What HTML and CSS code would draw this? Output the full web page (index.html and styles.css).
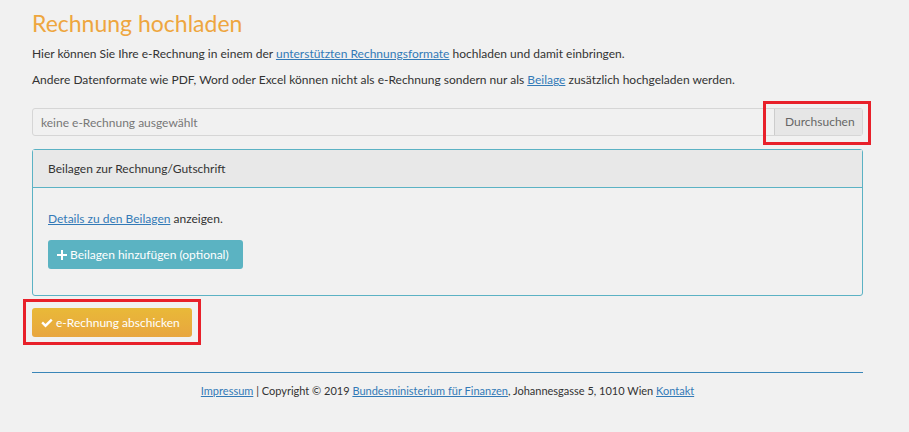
FILE: index.html
```html
<!DOCTYPE html>
<html lang="de">
<head>
    <meta charset="UTF-8">
    <meta name="viewport" content="width=device-width, initial-scale=1.0">
    <title>Rechnung hochladen</title>
    <link rel="stylesheet" href="styles.css">
</head>
<body>

    <div class="container">
        <h1 class="page-title">Rechnung hochladen</h1>
        <p>Hier können Sie Ihre e-Rechnung in einem der <a href="#">unterstützten Rechnungsformate</a> hochladen und damit einbringen.</p>
        <p>Andere Datenformate wie PDF, Word oder Excel können nicht als e-Rechnung sondern nur als <a href="#">Beilage</a> zusätzlich hochgeladen werden.</p>

        <!-- Dateiauswahl -->
        <div class="file-group">
            <div class="file-name">keine e-Rechnung ausgewählt</div>
            <div class="mark mark-browse">
                <span class="btn-browse">Durchsuchen</span>
            </div>
        </div>

        <!-- Beilagen -->
        <div class="panel">
            <div class="panel-heading">Beilagen zur Rechnung/Gutschrift</div>
            <div class="panel-body">
                <p><a href="#">Details zu den Beilagen</a> anzeigen.</p>
                <button class="btn btn-info">
                    <svg class="icon" viewBox="0 0 10 10"><path d="M4 0h2v4h4v2H6v4H4V6H0V4h4z" fill="#fff"/></svg>
                    Beilagen hinzufügen (optional)
                </button>
            </div>
        </div>

        <div class="mark mark-submit">
            <button class="btn btn-warning">
                <svg class="icon icon-check" viewBox="0 0 12 10"><path d="M0.3 5.3l1.7-1.7 2.5 2.5L9.9 0.7l1.7 1.7-7.1 7.1z" fill="#fff"/></svg>
                e-Rechnung abschicken
            </button>
        </div>

        <footer class="footer">
            <a href="#">Impressum</a> | Copyright © 2019 <a href="#">Bundesministerium für Finanzen</a>, Johannesgasse 5, 1010 Wien <a href="#">Kontakt</a>
        </footer>
    </div>

</body>
</html>
```

FILE: styles.css
```css
body {
    margin: 0;
    background: #f1f1f1;
    color: #333;
    font-family: Lato, "Open Sans", sans-serif;
    font-size: 12px;
}

.container {
    width: 831px;
    margin-left: 32px;
}

a {
    color: #337ab7;
    text-decoration: underline;
}

p {
    margin: 0 0 13px;
    line-height: 13px;
}

.page-title {
    color: #eea63f;
    font-size: 23px;
    font-weight: normal;
    margin: 10px 0 11px;
    line-height: 26px;
}

.file-group {
    display: flex;
    align-items: center;
    height: 28px;
    margin-top: 22px;
    border: 1px solid #d6d6d6;
    border-radius: 3px;
    box-sizing: border-box;
}

.file-name {
    flex: 1;
    padding-left: 8px;
    color: #777;
}

.mark {
    border: 3px solid #e8202a;
    display: flex;
}

.mark-browse {
    margin: -8px -9px -10px 0;
    padding: 5px 6px 7px 8px;
}

.btn-browse {
    background: #e6e6e6;
    border-left: 1px solid #ccc;
    color: #666;
    height: 26px;
    line-height: 26px;
    padding: 0 9px 0 10px;
    width: 68px;
}

.panel {
    margin-top: 13px;
    border: 1px solid #5bb2c4;
    border-radius: 3px;
}

.panel-heading {
    background: #e8e8e8;
    border-bottom: 1px solid #5bb2c4;
    height: 37px;
    line-height: 37px;
    padding-left: 15px;
}

.panel-body {
    padding: 24px 15px 26px;
}

.panel-body p {
    margin-bottom: 15px;
}

.btn {
    border: none;
    border-radius: 3px;
    color: #fff;
    font-family: inherit;
    font-size: 12px;
    height: 29px;
    padding: 0 10px;
    display: flex;
    align-items: center;
    gap: 3px;
}

.btn-info {
    background: #5bb3c2;
    width: 195px;
    padding-left: 9px;
}

.btn-warning {
    background: linear-gradient(#e9b938, #e8a63f);
    width: 160px;
    padding-left: 9px;
}

.icon {
    width: 10px;
    height: 10px;
}

.icon-check {
    width: 12px;
}

.mark-submit {
    width: fit-content;
    margin: 3px 0 0 -9px;
    padding: 6px 6px 5px 6px;
    height: 29px;
}

.footer {
    margin-top: 27px;
    border-top: 1px solid #3a86b8;
    text-align: center;
    font-size: 11px;
    padding-top: 11px;
}
```
